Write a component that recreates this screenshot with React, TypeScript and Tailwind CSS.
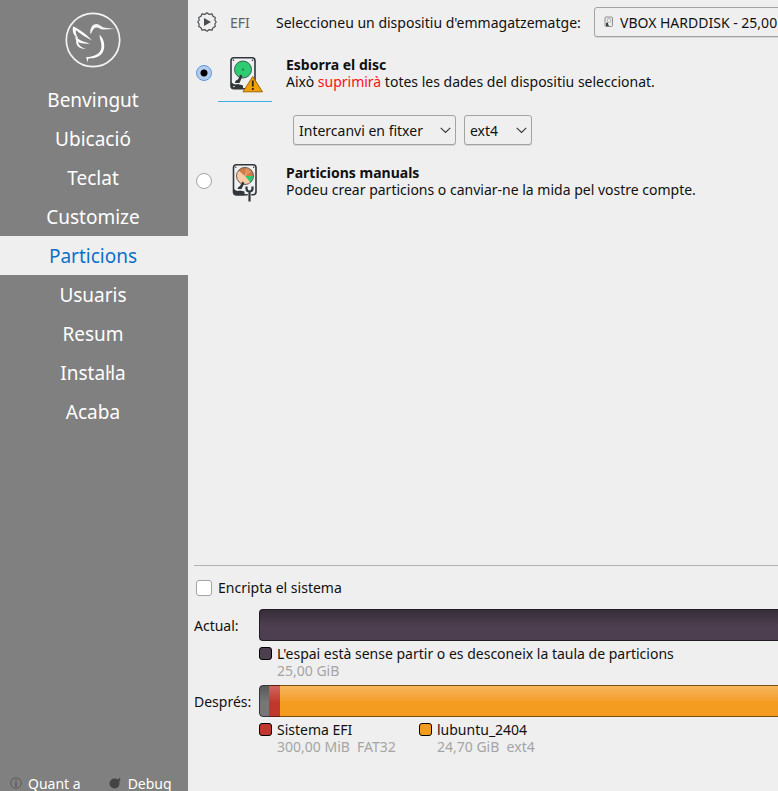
import React, { useState } from "react";

const steps = ["Benvingut", "Ubicació", "Teclat", "Customize", "Particions", "Usuaris", "Resum", "Instaŀla", "Acaba"];

function Logo() {
  return (
    <svg width="58" height="58" viewBox="0 0 58 58" fill="none" aria-hidden="true">
      <circle cx="29" cy="29" r="26.7" stroke="#f4f4f4" strokeWidth="1.700" />
      <path d="M26.500 23.500C25.500 18 28 13 32.500 13C35.500 13 37 15.500 39.500 16.500L51 18L39 18.600C36.500 18.600 35 16.500 32.500 16.500C29 16.500 28.500 20.500 26.500 23.500Z" fill="#f4f4f4" />
      <path d="M35.500 23.500C39 27 41 32 40 37.500C39 43 35 46 30 47C27 47.500 25 47 24 48L23.300 51.700L22.300 46C29 46 37 43.500 37.500 36C37.700 31 35.500 28 35.500 23.500Z" fill="#fff" />
      <path d="M9 15.500C14 17 22 23 28 29.500C22 26.500 16 22.500 11.800 19C11.500 22 12.500 25 14.500 27.500C10 25.500 8 21 9 15.500Z" fill="#fff" />
      <path d="M11.500 25.500C15 29.500 20 31 26.500 32.500C21 33 17 32.300 14 31C14.500 34.500 17.500 36.500 22 38C15.500 38.300 11.300 34.500 12.300 29.500C11.500 28.300 11.200 27 11.500 25.500Z" fill="#fff" />
    </svg>
  );
}

function Gear() {
  return (
    <svg className="shrink-0" width="20" height="20" viewBox="0 0 20 20" fill="none" aria-hidden="true">
      <path d="M10 .8L12.300 2.400L15 1.800L16 4.200L18.300 5.500L17.800 8L19.200 10L17.800 12L18.300 14.500L16 15.800L15 18.200L12.300 17.600L10 19.200L7.700 17.600L5 18.200L4 15.800L1.700 14.500L2.200 12L.8 10L2.200 8L1.700 5.500L4 4.200L5 1.800L7.700 2.400Z" stroke="#4a4d50" strokeWidth="1.200" strokeLinejoin="round" />
      <path d="M7 6L14 10L7 14Z" fill="#4a4d50" />
    </svg>
  );
}

function EraseDrive() {
  return (
    <svg width="36" height="40" viewBox="0 1 36 40" fill="none" aria-hidden="true">
      <rect x="3" y="2.800" width="24" height="31" rx="3" fill="#eff0f1" stroke="#31363b" strokeWidth="1.600" />
      <circle cx="5.500" cy="5.300" r=".8" fill="#31363b" />
      <circle cx="24.500" cy="5.300" r=".8" fill="#31363b" />
      <circle cx="15" cy="14.500" r="8.500" fill="#2ecc71" stroke="#3a6351" />
      <circle cx="15" cy="14.500" r=".9" fill="#275d40" />
      <path d="M12.500 19.500L14.500 21L11.500 28H7Q7 25 10 24.500Z" fill="#31363b" />
      <path d="M3 27Q6 30.500 10 29L15 30.500V34H5Q3 34 3 31Z" fill="#31363b" />
      <circle cx="6" cy="31.500" r=".8" fill="#eff0f1" />
      <path d="M24.800 21.500L34.500 36.800H15Z" fill="#f3a008" stroke="#9a670d" strokeWidth="1" strokeLinejoin="round" />
      <path d="M24.800 25.500V31.500M24.800 33V35" stroke="#35280e" strokeWidth="1.800" />
    </svg>
  );
}

function ManualDrive() {
  return (
    <svg width="36" height="40" viewBox="0 2 36 40" fill="none" aria-hidden="true">
      <rect x="3.500" y="2.800" width="22.500" height="30" rx="3" fill="#eff0f1" stroke="#31363b" strokeWidth="1.600" />
      <circle cx="5.800" cy="5.300" r=".7" fill="#31363b" />
      <circle cx="23.700" cy="5.300" r=".7" fill="#31363b" />
      <circle cx="15" cy="14" r="8.500" fill="#f9cba7" />
      <path d="M15 14L8.500 8.500A8.500 8.500 0 0 1 23.500 14Z" fill="#d07c45" />
      <path d="M15 14L17 5.700L21.500 8.500Z" fill="#e08f58" />
      <path d="M15 14H23.500A8.500 8.500 0 0 1 20.500 20.500Z" fill="#2ecc71" />
      <path d="M15 14L17 5.800M15 14L21.500 8.500" stroke="#f0b48a" strokeWidth=".6" />
      <circle cx="15" cy="14" r="8.500" stroke="#6a5c52" />
      <path d="M12.500 19.500L14.500 21L11.500 27H7.500Q7.500 25 10 24Z" fill="#31363b" />
      <path d="M3.500 26.500Q6 30 10 28.500L14.500 29.500V33.500H6Q3.500 33.500 3.500 31Z" fill="#31363b" />
      <path d="M16.500 24V27Q16.500 30 19.500 30Q22.500 30 22.500 27V24M19.500 30V36" stroke="#eff0f1" strokeWidth="3.500" />
      <path d="M16.500 24.500V26.500Q16.500 29.500 19.500 29.500Q22.500 29.500 22.500 26.500V24.500M19.500 29.500V39.500" stroke="#31363b" strokeWidth="2.200" />
    </svg>
  );
}

function MiniDrive() {
  return (
    <svg className="pointer-events-none absolute left-2.5 top-[9px]" width="10" height="12" viewBox="0 0 10 12" fill="none" aria-hidden="true">
      <rect x="1" y="1" width="7.500" height="9.500" rx="1" fill="#eee" stroke="#8b8d8f" />
      <circle cx="5" cy="4.500" r="2" stroke="#a2a4a6" strokeWidth=".8" />
      <path d="M2 7L4 6.500V8L5 10H2Z" fill="#3b3e41" />
    </svg>
  );
}

function Select({ label, options, className }: { label: string; options: string[]; className: string }) {
  return (
    <div className={`relative h-[30px] shrink-0 ${className}`}>
      <select aria-label={label} className="h-full w-full appearance-none rounded-[3px] border border-[#a3a3a3] bg-[#efefef] pl-[5px] pr-6 shadow-[0_1px_0_#d5d5d5] outline-none">
        {options.map((o) => <option key={o}>{o}</option>)}
      </select>
      <svg className="pointer-events-none absolute right-[5px] top-3" width="11" height="7" viewBox="0 0 11 7" fill="none" aria-hidden="true">
        <path d="M.7 .8L5.500 5.500L10.300 .8" stroke="#31363b" strokeWidth="1.100" />
      </svg>
    </div>
  );
}

function Radio({ label, checked, onChange }: { label: string; checked: boolean; onChange: () => void }) {
  return (
    <input
      type="radio"
      name="mode"
      aria-label={label}
      checked={checked}
      onChange={onChange}
      className="mt-[9px] size-4 shrink-0 appearance-none rounded-full border border-[#a3a3a3] bg-white checked:border-[#5b93dc] checked:bg-[radial-gradient(circle,#000_0_3px,#b3cdef_4px)]"
    />
  );
}

function Legend({ color, name, detail }: { color: string; name: string; detail: string }) {
  return (
    <div className="flex shrink-0 gap-[5px]">
      <span className={`mt-0.5 size-[13px] rounded-[3px] border border-black ${color}`} />
      <div className="whitespace-pre">
        <div>{name}</div>
        <div className="text-[#a5a5a5]">{detail}</div>
      </div>
    </div>
  );
}

export default function App() {
  const [mode, setMode] = useState("erase");
  return (
    <div className="flex h-screen overflow-hidden bg-[#efefef] font-['Noto_Sans',sans-serif] text-[14px] leading-[17px] text-[#111]">
      <aside className="flex w-[188px] shrink-0 flex-col bg-[#808080] text-white">
        <div className="flex h-20 justify-center pr-0.5 pt-[11px]"><Logo /></div>
        <nav className="flex flex-col">
          {steps.map((s) => (
            <button
              key={s}
              type="button"
              aria-current={s === "Particions" ? "step" : undefined}
              className={`h-[39px] pr-0.5 pt-0.5 text-center text-[19px] ${s === "Particions" ? "bg-[#efefef] text-[#0d6fcb]" : ""}`}
            >
              {s}
            </button>
          ))}
        </nav>
        <footer className="mt-auto flex h-4 gap-7 pl-2.5">
          <button type="button" className="flex items-center gap-1.5">
            <svg width="12" height="12" viewBox="0 0 12 12" fill="none" stroke="#5b5b5b" aria-hidden="true">
              <circle cx="6" cy="6" r="5.300" />
              <path d="M6 5V10M6 2.500V4" strokeWidth="1.500" />
            </svg>
            Quant a
          </button>
          <button type="button" className="flex items-center gap-1.5">
            <svg width="13" height="12" viewBox="0 0 13 12" aria-hidden="true">
              <circle cx="5.500" cy="6.500" r="5" fill="#444" />
              <path d="M8 3.500L11 1L10.500 4.500" fill="#444" stroke="#444" strokeWidth=".6" />
            </svg>
            Debug
          </button>
        </footer>
      </aside>

      <main className="flex min-w-0 flex-1 flex-col overflow-hidden pl-1.5 pt-[7px]">
        <header className="flex h-[30px] items-center pl-[3px]">
          <Gear />
          <span className="ml-[13px] w-[46px] shrink-0 text-[#5f6366]">EFI</span>
          <span className="w-[318px] shrink-0 whitespace-nowrap">Seleccioneu un dispositiu d'emmagatzematge:</span>
          <div className="relative h-[30px] w-[260px] shrink-0">
            <select aria-label="Seleccioneu un dispositiu d'emmagatzematge" className="h-full w-full appearance-none rounded-[3px] border border-[#a3a3a3] bg-[#efefef] pl-[25px] shadow-[0_1px_0_#d5d5d5] outline-none">
              <option>VBOX HARDDISK - 25,00 GiB (/dev/sda)</option>
            </select>
            <MiniDrive />
          </div>
        </header>

        <section className="mt-[19px] flex pl-0.5">
          <Radio label="Esborra el disc" checked={mode === "erase"} onChange={() => setMode("erase")} />
          <div className="ml-1.5 flex h-[46px] w-[54px] shrink-0 justify-center border-b border-[#3daee9] pl-0.5"><EraseDrive /></div>
          <div className="ml-3.5 whitespace-nowrap">
            <div className="font-bold">Esborra el disc</div>
            <p>Això <span className="text-[#ff1010]">suprimirà</span> totes les dades del dispositiu seleccionat.</p>
          </div>
        </section>

        <div className="mt-[13px] flex gap-2 pl-[99px]">
          <Select label="Memòria d'intercanvi" options={["Intercanvi en fitxer", "Sense intercanvi"]} className="w-[163px]" />
          <Select label="Sistema de fitxers" options={["ext4", "btrfs", "xfs"]} className="w-[68px]" />
        </div>

        <section className="mt-[19px] flex pl-0.5">
          <Radio label="Particions manuals" checked={mode === "manual"} onChange={() => setMode("manual")} />
          <div className="ml-1.5 flex w-[54px] shrink-0 justify-center pl-1.5"><ManualDrive /></div>
          <div className="ml-3.5 whitespace-nowrap">
            <div className="font-bold">Particions manuals</div>
            <p>Podeu crear particions o canviar-ne la mida pel vostre compte.</p>
          </div>
        </section>

        <section className="mt-auto border-t border-[#b4b4b4] pb-9 pt-[13px]">
          <label className="flex items-center gap-1.5 pl-0.5">
            <input type="checkbox" className="size-4 appearance-none rounded-[3px] border border-[#a3a3a3] bg-white checked:bg-[#b3cdef]" />
            Encripta el sistema
          </label>
          <div className="mt-[13px] grid grid-cols-[65px_1fr]">
            <span className="mt-2">Actual:</span>
            <div>
              <div className="h-8 rounded-l-[4px] border border-r-0 border-[#211b24] bg-linear-to-b from-[#372e39] to-[#4d3f50] to-55%" />
              <div className="mt-1 flex h-10">
                <Legend color="bg-[#4d3f50]" name="L'espai està sense partir o es desconeix la taula de particions" detail="25,00 GiB" />
              </div>
            </div>
            <span className="mt-2">Després:</span>
            <div>
              <div className="flex h-8 overflow-hidden rounded-l-[4px]">
                <div className="w-2.5 rounded-l-[4px] border border-r-0 border-[#363636] bg-linear-to-b from-[#5a5a5a] to-[#777] to-55%" />
                <div className="w-[11px] border-y border-[#611b15] bg-linear-to-b from-[#d0655c] to-[#c0372b] to-55%" />
                <div className="flex-1 border-y border-[#7b4f12] bg-linear-to-b from-[#f7b65c] to-[#f39c20] to-55%" />
              </div>
              <div className="mt-1 grid grid-cols-[160px_1fr]">
                <Legend color="bg-[#c0372b]" name="Sistema EFI" detail="300,00 MiB  FAT32" />
                <Legend color="bg-[#f39c20]" name="lubuntu_2404" detail="24,70 GiB  ext4" />
              </div>
            </div>
          </div>
        </section>
      </main>
    </div>
  );
}
